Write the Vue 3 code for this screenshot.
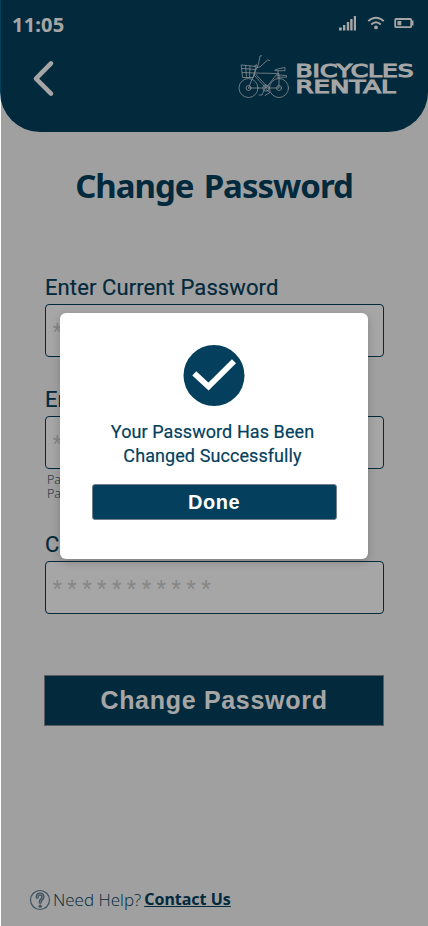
<script setup>
const fields = [
  { id: 'current', label: 'Enter Current Password' },
  { id: 'next', label: 'Enter New Password', hints: ['Password length', 'Password format'] },
  { id: 'confirm', label: 'Confirm New Password' }
]
const mask = '***********'
</script>

<template>
  <div class="screen">
    <header class="top">
      <div class="status">
        <span class="clock">11:05</span>
        <svg class="status-icons" viewBox="0 0 78 18" width="78" height="18">
          <g fill="#fff">
            <rect x="1" y="12.5" width="2.8" height="3" />
            <rect x="5" y="10" width="2.4" height="5.5" />
            <rect x="8.8" y="7" width="2.4" height="8.5" />
            <rect x="12.2" y="4" width="2.4" height="11.5" />
            <rect x="15.8" y="1" width="2.2" height="14.5" />
          </g>
          <g fill="none" stroke="#fff" stroke-width="1.8">
            <path d="M30.2 6.2Q38 -.8 45.8 6.2" />
            <path d="M33.2 9.5Q38 5 42.8 9.5" />
            <rect x="57.2" y="4" width="16" height="8.2" rx="1" />
          </g>
          <circle cx="38" cy="12.4" r="1.9" fill="#fff" />
          <path d="M59.5 6h3.8v4.2h-3.8zM73.5 5.6h2v5h-2z" fill="#fff" />
        </svg>
      </div>
      <div class="nav">
        <svg class="back" viewBox="0 0 24 38" width="24" height="38">
          <path d="M20 4.4 5 19.6 20 34.6" fill="none" stroke="#fff" stroke-width="4.6" stroke-linecap="round" stroke-linejoin="round" />
        </svg>
        <svg class="logo" viewBox="0 0 178 46" width="178" height="46">
          <g fill="none" stroke="#fff" stroke-width=".75" stroke-linecap="round" stroke-linejoin="round" opacity=".85">
            <circle cx="10.5" cy="34" r="9.5" />
            <circle cx="41" cy="34" r="9.5" />
            <circle cx="10.5" cy="34" r="2.5" />
            <circle cx="41" cy="34" r="2.5" />
            <circle cx="28" cy="34" r="3.2" />
            <path d="M10.5 34 17 18 20.5 10 22 2l1.7-.3M19 13.500l3-.5 7.500-7 2.200.5" />
            <path d="M16 19 41 19.500V34H10.500M16 21 28 34 38.500 20.500M17.500 20 29 32.500M28 31.500l-4 9.500h-3M28 35.500l4 3-5 3" />
            <path d="M37 16q3-1.500 10-2.500v3.200H38zM39 21.500q5-.8 9.500.2v1.500H39M40 17V21.500" />
            <path d="M3.500 11 18 12.500l-2.500 11H5zM4 14.500l13.500 1M4.500 18.500l12 .5M7.500 11.500l1 12M12 12l-.5 11.500M16 12.200l2.500-1.500 1 3" />
          </g>
          <g class="brand" fill="#fff" stroke="#fff" stroke-width="1.1">
            <text x="57.5" y="23.3" textLength="118" lengthAdjust="spacingAndGlyphs">BICYCLES</text>
            <text x="57.5" y="39.4" textLength="100" lengthAdjust="spacingAndGlyphs">RENTAL</text>
          </g>
        </svg>
      </div>
    </header>

    <main class="content">
      <h1>Change Password</h1>
      <form class="form" @submit.prevent>
        <div v-for="f in fields" :key="f.id" class="field" :class="f.id">
          <label :for="f.id">{{ f.label }}</label>
          <input :id="f.id" type="text" :placeholder="mask" />
          <p v-if="f.hints" class="hints">
            <span v-for="h in f.hints" :key="h">{{ h }}</span>
          </p>
        </div>
        <button class="submit">Change Password</button>
      </form>
    </main>

    <footer class="help">
      <svg viewBox="0 0 22 22" width="22" height="22" fill="none">
        <circle cx="11" cy="11" r="9.5" stroke="#5d7f99" stroke-width="1.2" />
        <path d="M8.2 8.2Q8.2 5 11 5t3 3c0 2.300-2.800 2.300-2.800 5.200" stroke="#5d7f99" stroke-width="3.2" stroke-linecap="round" />
        <path d="M8.2 8.2Q8.2 5 11 5t3 3c0 2.300-2.800 2.300-2.800 5.200" stroke="#c8d0d8" stroke-width=".8" stroke-linecap="round" />
        <circle cx="11.2" cy="17.2" r="1.6" fill="#5d7f99" />
      </svg>
      <span class="need">Need Help?</span>
      <a class="contact">Contact Us</a>
    </footer>

    <div class="overlay">
      <section class="dialog">
        <svg viewBox="0 0 62 62" width="62" height="62">
          <circle cx="31" cy="31.5" r="30.5" fill="#043f5d" />
          <path d="M11.300 29.300 25.500 42.500 51 17.200" fill="none" stroke="#fff" stroke-width="5.8" />
        </svg>
        <p class="message"><span>Your Password Has Been</span><span>Changed Successfully</span></p>
        <button class="done">Done</button>
      </section>
    </div>
  </div>
</template>

<style>
body { background: #fff; }
</style>

<style scoped>
* { box-sizing: border-box; margin: 0; }
.screen {
  position: relative;
  display: flex;
  flex-direction: column;
  width: 428px;
  height: 926px;
  overflow: hidden;
  background: linear-gradient(to right, #fff 1px, #f6f6f6 1px);
  color: #043f5d;
  font-family: Roboto, "Liberation Sans", sans-serif;
}
.top {
  height: 132px;
  flex: none;
  background: #043f5d;
  border-radius: 0 0 40px 40px;
}
.status {
  display: flex;
  justify-content: space-between;
  align-items: flex-start;
  padding: 10px 12px 0 12px;
  height: 54px;
}
.clock {
  color: #fff;
  font: 700 20px/30px "Noto Sans", "Open Sans", sans-serif;
  letter-spacing: 0.2px;
}
.status-icons { margin-top: 5px; }
.nav {
  display: flex;
  justify-content: space-between;
  padding: 0 12px 0 31px;
}
.back { margin-top: 5px; }
.brand { font: 400 17.8px "DejaVu Sans", sans-serif; }
.content {
  display: flex;
  flex-direction: column;
  flex: 1;
}
h1 {
  padding-top: 30px;
  text-align: center;
  font: 700 33px/48px "Noto Sans", "Open Sans", sans-serif;
  letter-spacing: -1px;
  word-spacing: 2.5px;
}
.form {
  display: flex;
  flex-direction: column;
  padding: 63px 44px 0 45px;
}
.field { display: flex; flex-direction: column; }
.current { height: 112px; }
.next { height: 145px; }
.confirm { height: 145px; }
label {
  height: 31px;
  font-size: 22px;
  line-height: 30px;
  letter-spacing: 0.1px;
  -webkit-text-stroke: 0.2px #043f5d;
  white-space: nowrap;
}
input {
  width: 339px;
  height: 53px;
  padding: 1px 6.5px 0;
  border: 1px solid #043f5d;
  border-radius: 4px;
  background: #fff;
  color: #043f5d;
  font: 22px Roboto, sans-serif;
  letter-spacing: 5.4px;
}
input::placeholder { color: #d0d0d0; opacity: 1; }
.hints {
  display: flex;
  flex-direction: column;
  padding: 4px 0 0 2px;
  font: 300 12.5px/14px "Open Sans", sans-serif;
}
.submit {
  width: 340px;
  height: 51px;
  margin-left: -1px;
  padding: 0;
  border: 1px solid #8b8f92;
  background: #043f5d;
  color: #fff;
  font: 700 25px "Liberation Sans", sans-serif;
  letter-spacing: 0.7px;
}
.help {
  display: flex;
  align-items: center;
  height: 52px;
  padding: 0 0 1px 29px;
}
.need {
  margin: 0 3px 0 2px;
  font: 300 17px/24px "Open Sans", sans-serif;
}
.contact {
  padding-bottom: 2px;
  font: 700 16px/24px "Noto Sans", "Open Sans", sans-serif;
  text-decoration: underline;
}
.overlay {
  position: absolute;
  inset: 0 0 0 1px;
  display: flex;
  justify-content: center;
  align-items: flex-start;
  padding-top: 313px;
  background: rgba(0, 0, 0, 0.35);
}
.dialog {
  display: flex;
  flex-direction: column;
  align-items: center;
  width: 308px;
  height: 246px;
  margin-right: 1px;
  padding-top: 31px;
  border-radius: 6px;
  background: #fff;
  box-shadow: 0 3px 10px rgba(0, 0, 0, 0.2);
}
.message {
  display: flex;
  flex-direction: column;
  align-items: center;
  margin: 14px 3px 0 0;
  font-size: 18px;
  line-height: 24px;
  letter-spacing: 0.08px;
  -webkit-text-stroke: 0.2px #043f5d;
}
.done {
  width: 245px;
  height: 36px;
  margin-top: 16px;
  padding: 0;
  border: 1px solid #707f89;
  border-radius: 3px;
  background: #043f5d;
  color: #fff;
  font: 700 20px "Liberation Sans", sans-serif;
  letter-spacing: 0.5px;
}
</style>
